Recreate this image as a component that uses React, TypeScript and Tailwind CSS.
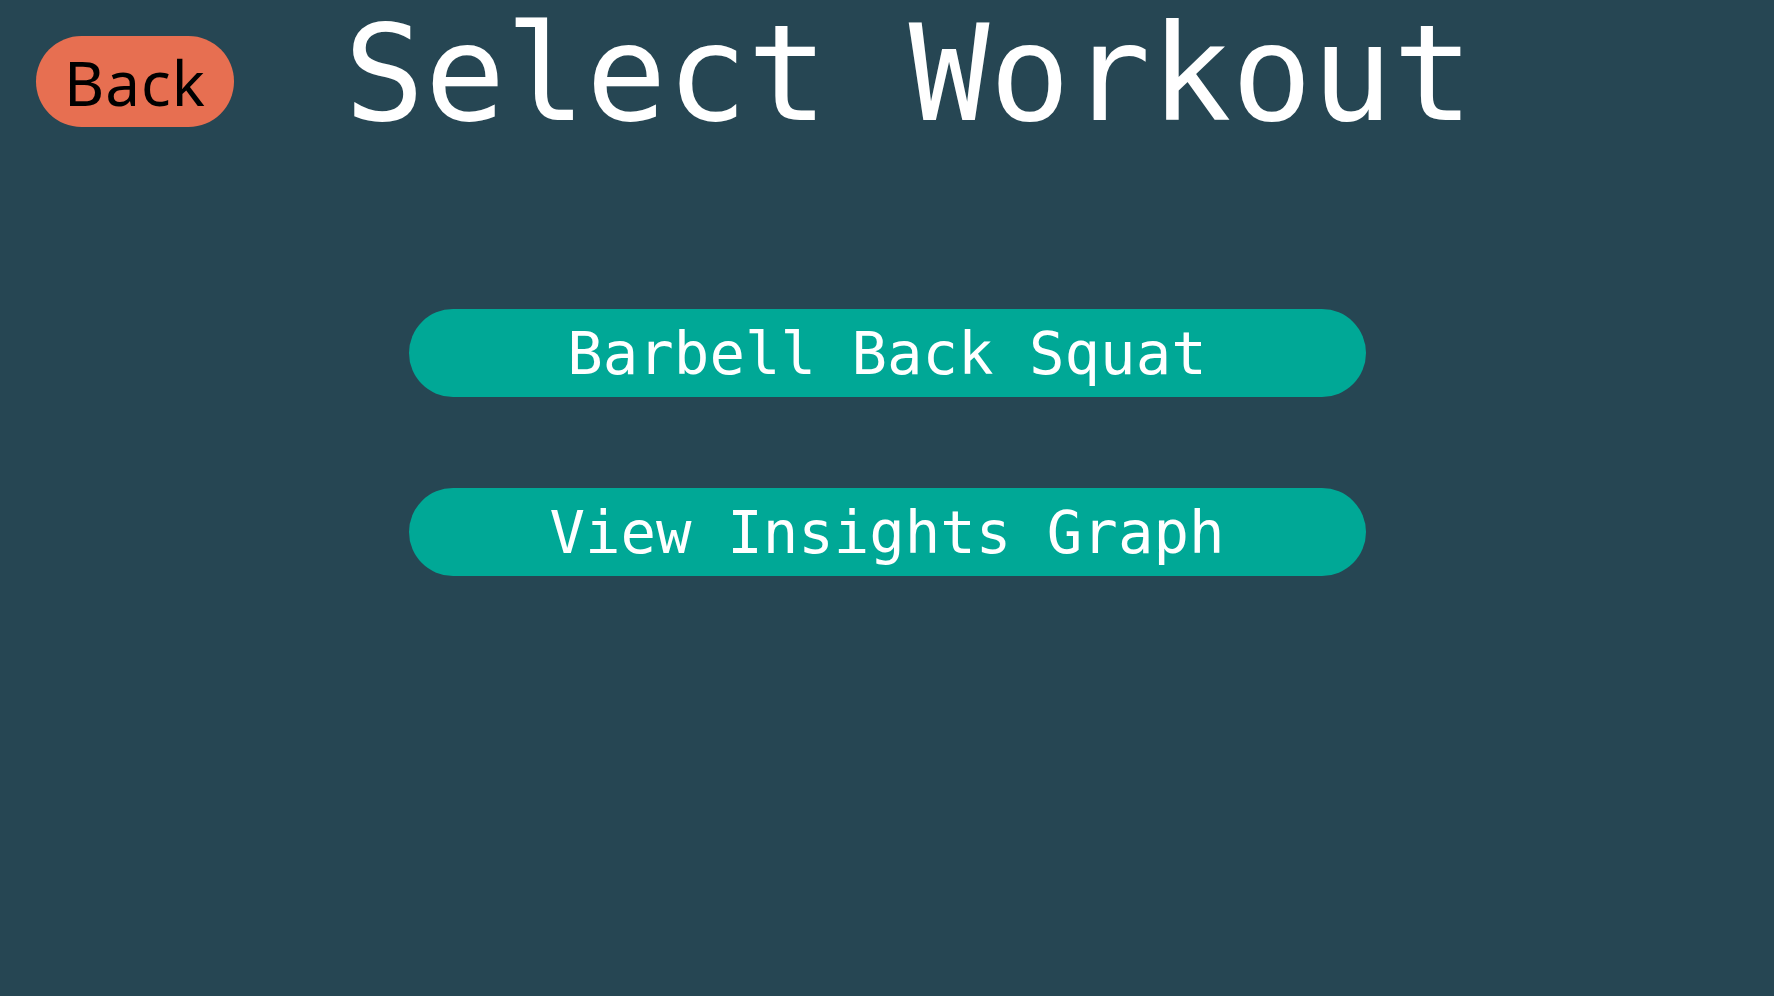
export default function App() {
  const options = ['Barbell Back Squat', 'View Insights Graph'];

  return (
    <div className="min-h-screen w-full bg-[#264653]">
      {/* Header */}
      <header className="flex items-start">
        <button className="ml-[36px] mt-[36px] flex h-[91px] w-[198px] shrink-0 items-center justify-center rounded-full bg-[#e76f51] font-['Noto_Sans',sans-serif] text-[62px] leading-none tracking-[1px] text-black">
          Back
        </button>
        <h1 className="ml-[110px] mt-[1px] whitespace-nowrap font-['DejaVu_Sans_Mono',monospace] text-[134px] leading-[1.1] text-white">
          Select Workout
        </h1>
      </header>

      {/* Options */}
      <main className="mt-[161px] flex flex-col items-center gap-[91px]">
        {options.map((label) => (
          <button
            key={label}
            className="flex h-[88px] w-[957px] items-center justify-center rounded-full bg-[#00a896] font-['DejaVu_Sans_Mono',monospace] text-[59px] leading-none text-white"
          >
            {label}
          </button>
        ))}
      </main>
    </div>
  );
}
